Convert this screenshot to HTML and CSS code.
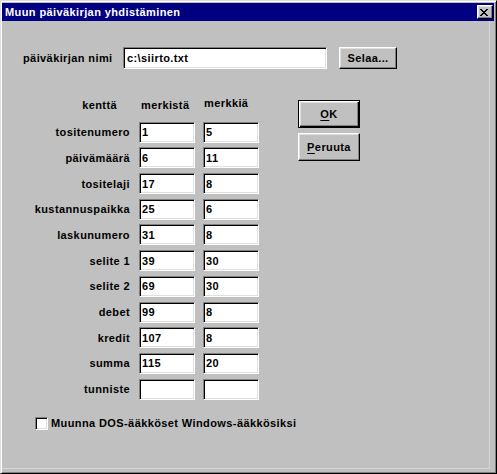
FILE: index.html
```html
<!DOCTYPE html>
<html>
<head>
<meta charset="utf-8">
<link rel="stylesheet" href="styles.css">
</head>
<body>
<div class="window">
  <div class="titlebar">
    <span class="title">Muun päiväkirjan yhdistäminen</span>
    <span class="close"><svg class="close-x" width="8" height="7" viewBox="0 0 8 7"><path d="M0 0h2v1H0zM6 0h2v1H6zM1 1h2v1H1zM5 1h2v1H5zM2 2h4v1H2zM3 3h2v1H3zM2 4h4v1H2zM1 5h2v1H1zM5 5h2v1H5zM0 6h2v1H0zM6 6h2v1H6z" fill="#000"/></svg></span>
  </div>
  <div class="client">
    <div class="file-row">
      <span class="file-label">päiväkirjan nimi</span>
      <div class="field file-field">c:\siirto.txt</div>
      <button class="btn browse">Selaa...</button>
    </div>
    <div class="main">
      <div class="grid">
        <div class="hdr hdr-field">kenttä</div>
        <div class="hdr hdr-start">merkistä</div>
        <div class="hdr hdr-len">merkkiä</div>

        <div class="lbl">tositenumero</div><div class="field box">1</div><div class="field box">5</div>
        <div class="lbl">päivämäärä</div><div class="field box">6</div><div class="field box">11</div>
        <div class="lbl">tositelaji</div><div class="field box">17</div><div class="field box">8</div>
        <div class="lbl">kustannuspaikka</div><div class="field box">25</div><div class="field box">6</div>
        <div class="lbl">laskunumero</div><div class="field box">31</div><div class="field box">8</div>
        <div class="lbl">selite 1</div><div class="field box">39</div><div class="field box">30</div>
        <div class="lbl">selite 2</div><div class="field box">69</div><div class="field box">30</div>
        <div class="lbl">debet</div><div class="field box">99</div><div class="field box">8</div>
        <div class="lbl">kredit</div><div class="field box">107</div><div class="field box">8</div>
        <div class="lbl">summa</div><div class="field box">115</div><div class="field box">20</div>
        <div class="lbl">tunniste</div><div class="field box"></div><div class="field box"></div>
      </div>
      <div class="actions">
        <button class="btn btn-large btn-default"><u>O</u>K</button>
        <button class="btn btn-large"><u>P</u>eruuta</button>
      </div>
    </div>
    <div class="check">
      <span class="checkbox"></span>
      <span class="check-text">Muunna DOS-ääkköset Windows-ääkkösiksi</span>
    </div>
  </div>
</div>
</body>
</html>
```

FILE: styles.css
```css
* {
  box-sizing: border-box;
}

html,
body {
  margin: 0;
  padding: 0;
}

body {
  background: #c0c0c0;
  font-family: "Liberation Sans", Arial, sans-serif;
  font-weight: bold;
  font-size: 11px;
  letter-spacing: 0.4px;
  color: #000;
}

.window {
  width: 497px;
  height: 474px;
  background: #c0c0c0;
  border: 1px solid;
  border-color: #dfdfdf #000 #000 #dfdfdf;
  box-shadow: inset 1px 1px 0 #fff, inset -1px -1px 0 #808080;
  padding: 2px 2px 0 1px;
  display: flex;
  flex-direction: column;
}

.titlebar {
  height: 18px;
  background: #000080;
  color: #fff;
  display: flex;
  align-items: center;
  justify-content: space-between;
  padding: 0 1px 0 3px;
  flex: none;
}

.title {
  line-height: 13px;
  white-space: nowrap;
}

.close {
  width: 16px;
  height: 14px;
  background: #c0c0c0;
  border: 1px solid;
  border-color: #fff #000 #000 #fff;
  box-shadow: inset -1px -1px 0 #808080, inset 1px 1px 0 #dfdfdf;
  display: block;
}

.close-x {
  display: block;
  margin: 3px 0 0 2px;
}

.client {
  width: 488px;
  height: 448px;
  border-right: 1px solid #d6d6d6;
  border-bottom: 1px solid #d6d6d6;
  padding: 26px 0 0 21px;
  display: flex;
  flex-direction: column;
  align-items: flex-start;
}

.file-row {
  display: flex;
  align-items: center;
  height: 22px;
}

.file-label {
  width: 100px;
  white-space: nowrap;
}

.field {
  background: #fff;
  border: 1px solid;
  border-color: #808080 #fff #fff #808080;
  box-shadow: inset 1px 1px 0 #000, inset -1px -1px 0 #dfdfdf;
  display: flex;
  align-items: center;
  white-space: nowrap;
  overflow: hidden;
}

.file-field {
  width: 204px;
  height: 22px;
  padding-left: 3px;
}

.btn {
  font: inherit;
  letter-spacing: inherit;
  color: #000;
  background: #c0c0c0;
  padding: 0;
  margin: 0;
  border: 1px solid;
  border-color: #fff #000 #000 #fff;
  box-shadow: inset -1px -1px 0 #808080, inset 1px 1px 0 #dfdfdf;
  display: flex;
  align-items: center;
  justify-content: center;
}

.browse {
  width: 58px;
  height: 22px;
  margin-left: 12px;
}

.main {
  display: flex;
  margin-top: 27px;
  align-items: flex-start;
}

.grid {
  display: grid;
  grid-template-columns: 108px 56px 56px;
  grid-template-rows: repeat(12, 21px);
  column-gap: 8px;
  row-gap: 4.7px;
}

.hdr {
  line-height: 13px;
  white-space: nowrap;
  align-self: start;
}

.hdr-field {
  text-align: right;
  padding-right: 14px;
  padding-top: 2.5px;
}

.hdr-start {
  padding-left: 2px;
  padding-top: 2.5px;
}

.hdr-len {
  padding-left: 1px;
  padding-top: 0.5px;
}

.lbl {
  display: flex;
  align-items: center;
  justify-content: flex-end;
  padding-right: 1px;
  white-space: nowrap;
}

.box {
  height: 21px;
  padding-left: 2px;
}

.actions {
  display: flex;
  flex-direction: column;
  gap: 5px;
  margin-left: 39px;
  margin-top: 4px;
}

.btn-large {
  width: 62px;
  height: 28px;
}

.btn-default {
  border: 1px solid #000;
  box-shadow: inset 1px 1px 0 #fff, inset -1px -1px 0 #000, inset -2px -2px 0 #808080, inset 2px 2px 0 #dfdfdf;
}

.btn u {
  text-decoration: underline;
  text-underline-offset: 2px;
}

.check {
  display: flex;
  align-items: center;
  margin-top: 17px;
  margin-left: 12px;
}

.checkbox {
  width: 13px;
  height: 13px;
  background: #fff;
  border: 1px solid;
  border-color: #808080 #fff #fff #808080;
  box-shadow: inset 1px 1px 0 #000, inset -1px -1px 0 #dfdfdf;
  margin-right: 3px;
  flex: none;
}

.check-text {
  white-space: nowrap;
  line-height: 13px;
}
```
